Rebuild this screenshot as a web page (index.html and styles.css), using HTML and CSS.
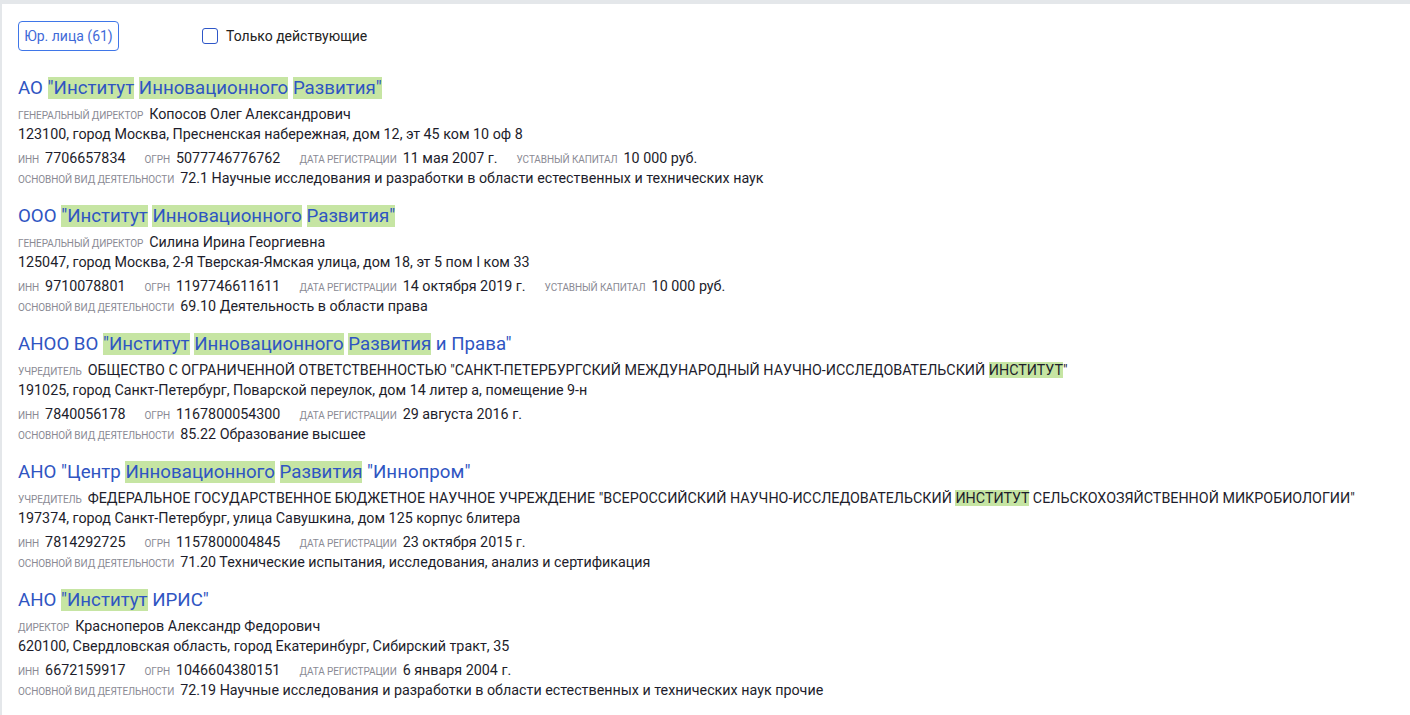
FILE: index.html
```html
<!DOCTYPE html>
<html lang="ru">
<head>
<meta charset="utf-8">
<link rel="stylesheet" href="styles.css">
</head>
<body>
<div class="card">
  <div class="toolbar">
    <button class="tab">Юр. лица (61)</button>
    <label class="check"><span class="box"></span>Только действующие</label>
  </div>

  <div class="entry">
    <div class="title">АО <mark>"Институт</mark> <mark>Инновационного</mark> <mark>Развития"</mark></div>
    <div class="line"><span class="lbl">Генеральный директор</span>Копосов Олег Александрович</div>
    <div class="line">123100, город Москва, Пресненская набережная, дом 12, эт 45 ком 10 оф 8</div>
    <div class="line gap"><span class="lbl">ИНН</span><span class="val">7706657834</span><span class="lbl">ОГРН</span><span class="val">5077746776762</span><span class="lbl">Дата регистрации</span><span class="val">11 мая 2007 г.</span><span class="lbl">Уставный капитал</span><span class="val">10 000 руб.</span></div>
    <div class="line"><span class="lbl">Основной вид деятельности</span>72.1 Научные исследования и разработки в области естественных и технических наук</div>
  </div>

  <div class="entry">
    <div class="title">ООО <mark>"Институт</mark> <mark>Инновационного</mark> <mark>Развития"</mark></div>
    <div class="line"><span class="lbl">Генеральный директор</span>Силина Ирина Георгиевна</div>
    <div class="line">125047, город Москва, 2-Я Тверская-Ямская улица, дом 18, эт 5 пом I ком 33</div>
    <div class="line gap"><span class="lbl">ИНН</span><span class="val">9710078801</span><span class="lbl">ОГРН</span><span class="val">1197746611611</span><span class="lbl">Дата регистрации</span><span class="val">14 октября 2019 г.</span><span class="lbl">Уставный капитал</span><span class="val">10 000 руб.</span></div>
    <div class="line"><span class="lbl">Основной вид деятельности</span>69.10 Деятельность в области права</div>
  </div>

  <div class="entry">
    <div class="title">АНОО ВО <mark>"Институт</mark> <mark>Инновационного</mark> <mark>Развития</mark> и Права"</div>
    <div class="line"><span class="lbl">Учредитель</span>ОБЩЕСТВО С ОГРАНИЧЕННОЙ ОТВЕТСТВЕННОСТЬЮ "САНКТ-ПЕТЕРБУРГСКИЙ МЕЖДУНАРОДНЫЙ НАУЧНО-ИССЛЕДОВАТЕЛЬСКИЙ <mark>ИНСТИТУТ</mark>"</div>
    <div class="line">191025, город Санкт-Петербург, Поварской переулок, дом 14 литер а, помещение 9-н</div>
    <div class="line gap"><span class="lbl">ИНН</span><span class="val">7840056178</span><span class="lbl">ОГРН</span><span class="val">1167800054300</span><span class="lbl">Дата регистрации</span><span class="val">29 августа 2016 г.</span></div>
    <div class="line"><span class="lbl">Основной вид деятельности</span>85.22 Образование высшее</div>
  </div>

  <div class="entry">
    <div class="title">АНО "Центр <mark>Инновационного</mark> <mark>Развития</mark> "Иннопром"</div>
    <div class="line"><span class="lbl">Учредитель</span>ФЕДЕРАЛЬНОЕ ГОСУДАРСТВЕННОЕ БЮДЖЕТНОЕ НАУЧНОЕ УЧРЕЖДЕНИЕ "ВСЕРОССИЙСКИЙ НАУЧНО-ИССЛЕДОВАТЕЛЬСКИЙ <mark>ИНСТИТУТ</mark> СЕЛЬСКОХОЗЯЙСТВЕННОЙ МИКРОБИОЛОГИИ"</div>
    <div class="line">197374, город Санкт-Петербург, улица Савушкина, дом 125 корпус 6литера</div>
    <div class="line gap"><span class="lbl">ИНН</span><span class="val">7814292725</span><span class="lbl">ОГРН</span><span class="val">1157800004845</span><span class="lbl">Дата регистрации</span><span class="val">23 октября 2015 г.</span></div>
    <div class="line"><span class="lbl">Основной вид деятельности</span>71.20 Технические испытания, исследования, анализ и сертификация</div>
  </div>

  <div class="entry">
    <div class="title">АНО <mark>"Институт</mark> ИРИС"</div>
    <div class="line"><span class="lbl">Директор</span>Красноперов Александр Федорович</div>
    <div class="line">620100, Свердловская область, город Екатеринбург, Сибирский тракт, 35</div>
    <div class="line gap"><span class="lbl">ИНН</span><span class="val">6672159917</span><span class="lbl">ОГРН</span><span class="val">1046604380151</span><span class="lbl">Дата регистрации</span><span class="val">6 января 2004 г.</span></div>
    <div class="line"><span class="lbl">Основной вид деятельности</span>72.19 Научные исследования и разработки в области естественных и технических наук прочие</div>
  </div>
</div>
</body>
</html>
```

FILE: styles.css
```css
html, body {
  margin: 0;
  padding: 0;
  background: #e4e7ea;
  height: 100%;
  overflow: hidden;
}
body {
  font-family: Roboto, "Noto Sans", sans-serif;
  color: #1d1d2b;
}
.card {
  margin: 4px 0 0 2px;
  background: #fff;
  height: calc(100% - 4px);
  padding: 17px 16px 0;
  box-sizing: border-box;
}
.toolbar {
  display: flex;
  align-items: center;
  height: 30px;
  margin-bottom: 26px;
}
.tab {
  box-sizing: border-box;
  width: 101px;
  height: 30px;
  padding: 0;
  border: 1px solid #3f76e8;
  border-radius: 4px;
  background: #fff;
  color: #3f6ad8;
  font-family: inherit;
  font-size: 14px;
}
.check {
  display: flex;
  align-items: center;
  margin-left: 83px;
  font-size: 14px;
  color: #222;
}
.box {
  width: 14px;
  height: 14px;
  border: 1px solid #2e57c8;
  border-radius: 3px;
  margin-right: 8px;
}
.entry {
  margin-bottom: 17px;
}
.title {
  font-size: 18.7px;
  line-height: 22px;
  height: 22px;
  color: #2f55c2;
  white-space: nowrap;
}
mark {
  background: #c6e5a3;
  color: inherit;
  line-height: 1;
}
.line {
  font-size: 14.3px;
  line-height: 20px;
  height: 20px;
  white-space: nowrap;
}
.line mark {
  line-height: 1;
}
.title + .line {
  margin-top: 5px;
}
.line.gap {
  margin-top: 4px;
}
.lbl {
  font-size: 10px;
  line-height: 1;
  text-transform: uppercase;
  color: #8a8a94;
  margin-right: 6px;
  letter-spacing: -0.1px;
}
.val {
  margin-right: 19px;
}
```
